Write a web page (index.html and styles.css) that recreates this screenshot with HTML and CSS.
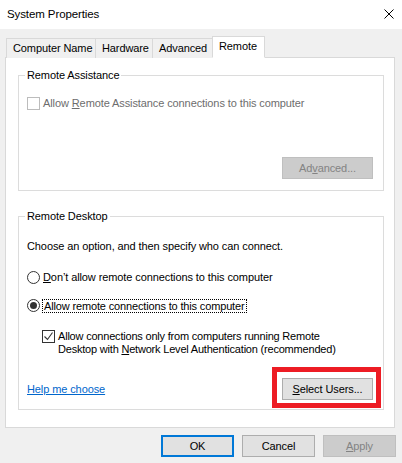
FILE: index.html
```html
<!DOCTYPE html>
<html lang="en">

<head>
    <meta charset="UTF-8">
    <title>System Properties</title>
    <link rel="stylesheet" href="styles.css">
</head>

<body>
    <div class="window">
        <div class="titlebar">
            <span class="title">System Properties</span>
            <svg class="close" width="10" height="10" viewBox="0 0 10 10">
                <path d="M0.5 0.5 L9.5 9.5 M9.5 0.5 L0.5 9.5" stroke="#000" stroke-width="1" fill="none" />
            </svg>
        </div>

        <div class="dialog">
            <div class="tabs">
                <div class="tab tab-name">Computer Name</div>
                <div class="tab tab-hardware">Hardware</div>
                <div class="tab tab-advanced">Advanced</div>
                <div class="tab tab-remote active">Remote</div>
            </div>

            <div class="panel">
                <fieldset class="group group-assist">
                    <legend>Remote Assistance</legend>
                    <label class="check disabled">
                        <span class="box"></span>
                        <span>Allow <u>R</u>emote Assistance connections to this computer</span>
                    </label>
                    <button class="btn btn-wide btn-right" disabled>Ad<u>v</u>anced...</button>
                </fieldset>

                <fieldset class="group group-desktop">
                    <legend>Remote Desktop</legend>
                    <p class="intro">Choose an option, and then specify who can connect.</p>
                    <label class="radio radio-first">
                        <span class="dot"></span>
                        <span><u>D</u>on’t allow remote connections to this computer</span>
                    </label>
                    <label class="radio radio-second checked">
                        <span class="dot"></span>
                        <span class="focus">Allow remote connections to this computer</span>
                    </label>
                    <label class="check nla">
                        <span class="box">
                            <svg width="11" height="11" viewBox="0 0 11 11">
                                <path d="M1.5 5.5 L4.5 8.5 L9.5 1.5" stroke="#333" stroke-width="1.1" fill="none" />
                            </svg>
                        </span>
                        <span class="nla-text">Allow connections only from computers running Remote<br>Desktop with <u>N</u>etwork Level Authentication (recommended)</span>
                    </label>
                    <div class="group-foot">
                        <a class="link" href="#">Help me choose</a>
                        <span class="highlight">
                            <button class="btn btn-wide"><u>S</u>elect Users...</button>
                        </span>
                    </div>
                </fieldset>
            </div>

            <div class="actions">
                <button class="btn btn-default">OK</button>
                <button class="btn">Cancel</button>
                <button class="btn" disabled><u>A</u>pply</button>
            </div>
        </div>
    </div>
</body>

</html>
```

FILE: styles.css
```css
* {
    margin: 0;
    padding: 0;
    box-sizing: border-box;
}

body {
    font-family: "Liberation Sans", Arial, sans-serif;
    font-size: 11px;
    letter-spacing: -0.1px;
    color: #000;
    background: #f0f0f0;
}

.window {
    width: 402px;
    height: 463px;
    background: #f0f0f0;
    overflow: hidden;
}

/* title bar */
.titlebar {
    height: 29px;
    background: #fff;
    display: flex;
    justify-content: space-between;
    align-items: flex-start;
    padding: 0 8px 0 7px;
}

.title {
    line-height: 28px;
    font-size: 11.5px;
}

.close {
    margin-top: 9px;
    display: block;
}

/* tabs */
.dialog {
    padding: 7px 0 0 5px;
}

.tabs {
    display: flex;
    align-items: flex-end;
    height: 22px;
    margin-left: 1px;
}

.tab {
    height: 20px;
    line-height: 18px;
    border: 1px solid #d9d9d9;
    border-bottom: none;
    background: #f0f0f0;
    padding-left: 6px;
    white-space: nowrap;
}

.tab + .tab {
    margin-left: -1px;
}

.tab-name {
    width: 90px;
}

.tab-hardware {
    width: 58px;
}

.tab-advanced {
    width: 61px;
}

.tab-remote {
    width: 53px;
}

.tab.active {
    height: 22px;
    line-height: 18px;
    background: #fff;
    border-bottom: 1px solid #fff;
    position: relative;
    z-index: 1;
}

.panel {
    width: 390px;
    height: 371px;
    margin-top: -1px;
    background: #fff;
    border: 1px solid #d9d9d9;
    padding: 10px 10px 0 12px;
}

/* group boxes */
.group {
    border: 1px solid #dcdcdc;
    padding: 0 10px 0 8px;
    min-width: 0;
}

.group legend {
    line-height: 15px;
    padding: 0 2px;
    margin-left: -2px;
}

.group-assist {
    padding-bottom: 11px;
}

.group-desktop {
    margin-top: 18px;
    padding-bottom: 9px;
}

.check,
.radio {
    display: flex;
    align-items: center;
    line-height: 15px;
    height: 15px;
}

.box,
.dot {
    width: 13px;
    height: 13px;
    border: 1px solid #333;
    background: #fff;
    margin-right: 3px;
    flex-shrink: 0;
    display: flex;
    align-items: center;
    justify-content: center;
}

.box svg {
    display: block;
}

.dot {
    border-radius: 50%;
}

.checked .dot::after {
    content: "";
    width: 7px;
    height: 7px;
    border-radius: 50%;
    background: #333;
}

.group-assist .check {
    margin-top: 13px;
}

.check.disabled {
    color: #6d6d6d;
}

.check.disabled .box {
    border-color: #bcbcbc;
}

.intro {
    margin-top: 15px;
    line-height: 15px;
}

.radio-first {
    margin-top: 16px;
}

.radio-second {
    margin-top: 13px;
}

.focus {
    outline: 1px dotted #000;
    padding: 0 1px;
    line-height: 12px;
    letter-spacing: -0.15px;
}

.nla {
    margin-top: 17px;
    margin-left: 15px;
    height: 26px;
    line-height: 13px;
    align-items: flex-start;
}

.nla-text {
    letter-spacing: -0.2px;
}

.group-foot {
    margin-top: 22px;
    display: flex;
    justify-content: space-between;
    align-items: center;
}

.link {
    color: #0066cc;
    text-decoration: underline;
}

/* annotation drawn over the button */
.highlight {
    position: relative;
    display: block;
}

.highlight::after {
    content: "";
    position: absolute;
    top: -11px;
    left: -10px;
    right: -8px;
    bottom: -8px;
    border: 5px solid #ed1c24;
}

/* buttons */
.btn {
    display: block;
    height: 22px;
    width: 73px;
    font: inherit;
    letter-spacing: inherit;
    color: #000;
    background: #e1e1e1;
    border: 1px solid #adadad;
    text-align: center;
}

.btn-wide {
    width: 91px;
}

.btn-right {
    margin-top: 46px;
    margin-left: auto;
}

.btn:disabled {
    background: #cccccc;
    border-color: #bfbfbf;
    color: #838383;
}

.btn-default {
    border: 2px solid #0078d7;
}

.actions {
    display: flex;
    justify-content: flex-end;
    gap: 8px;
    margin-top: 7px;
    padding-right: 6px;
}
```
